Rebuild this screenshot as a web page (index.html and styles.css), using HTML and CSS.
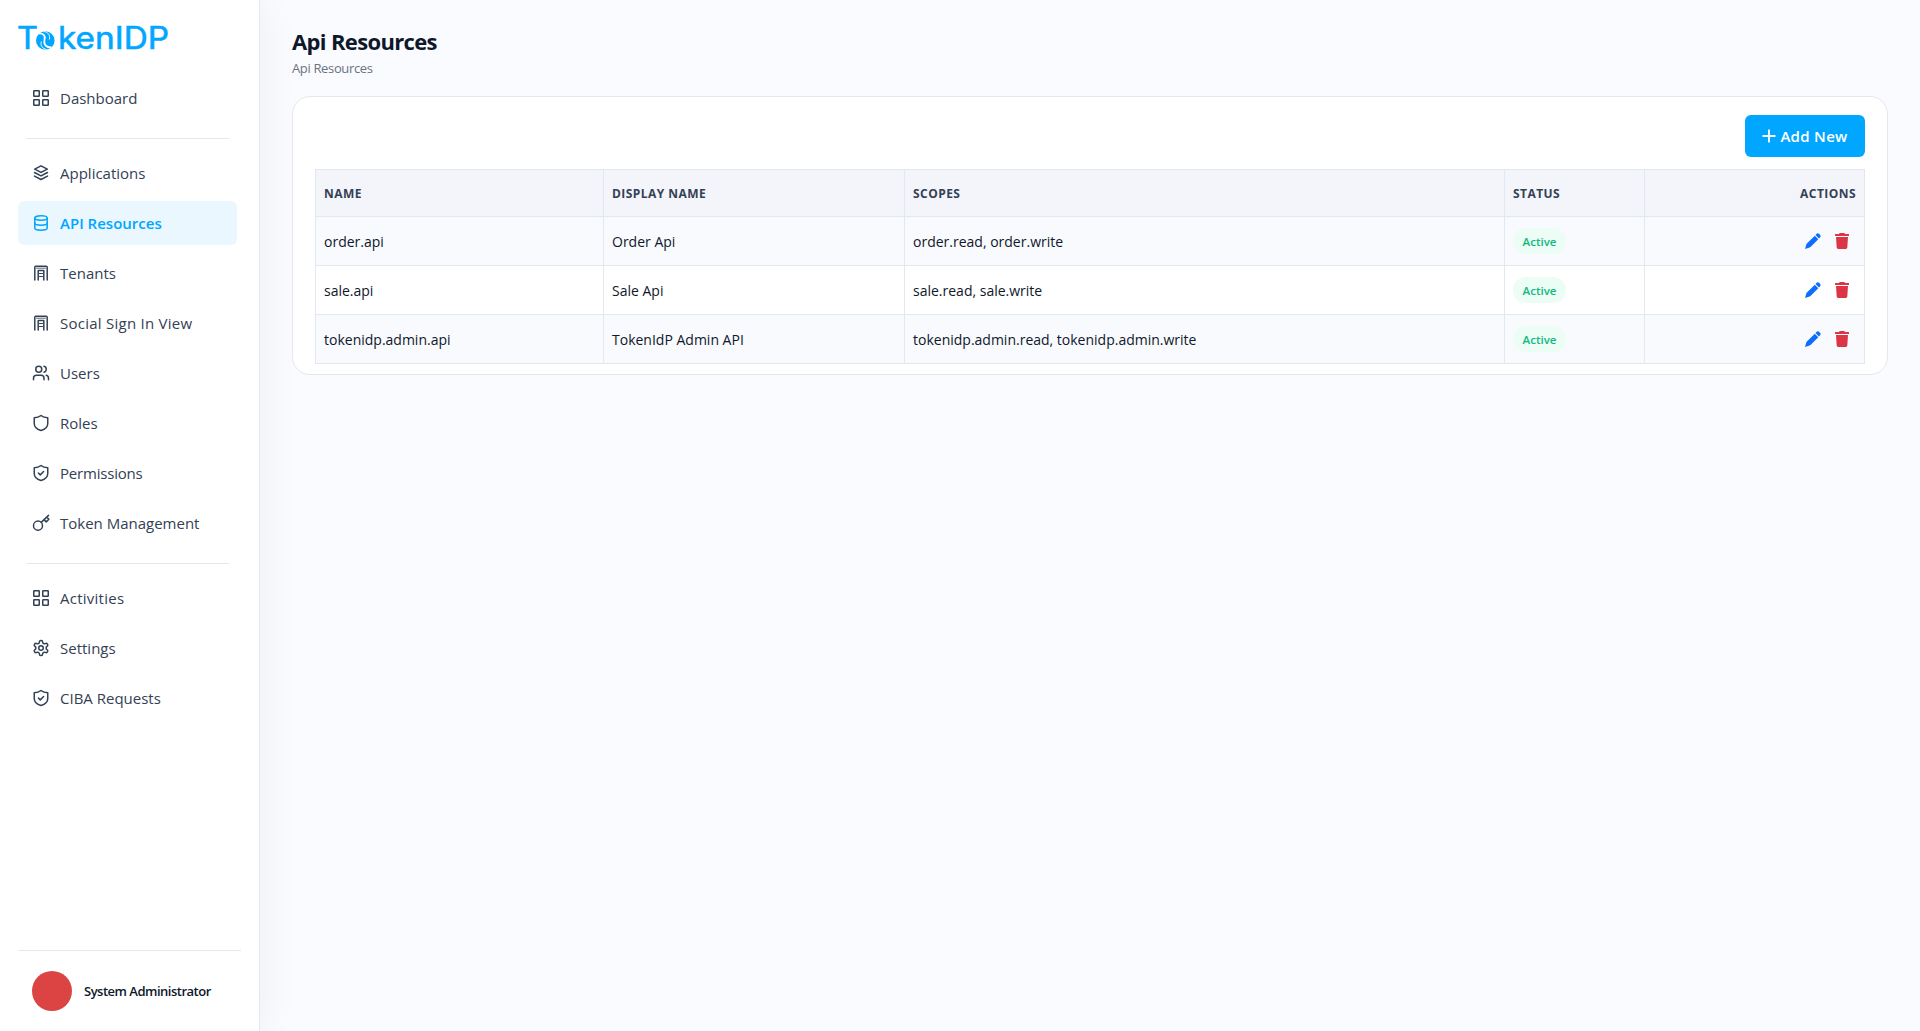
FILE: index.html
```
<!DOCTYPE html>
<html lang="en">
<head>
  <meta charset="UTF-8">
  <meta name="viewport" content="width=device-width, initial-scale=1.0">
  <title>Api Resources - TokenIDP</title>
  <link rel="stylesheet" href="styles.css">
</head>
<body>

  <!-- Shared icons -->
  <svg class="icon-defs" width="0" height="0">
    <symbol id="grid" viewBox="0 0 18 18">
      <rect x="1.75" y="1.75" width="5.5" height="5.5" rx="0.6"/>
      <rect x="10.75" y="1.75" width="5.5" height="5.5" rx="0.6"/>
      <rect x="1.75" y="10.75" width="5.5" height="5.5" rx="0.6"/>
      <rect x="10.75" y="10.75" width="5.5" height="5.5" rx="0.6"/>
    </symbol>
    <symbol id="layers" viewBox="0 0 18 18">
      <path d="M9 1.8 L15.3 5.1 L9 8.4 L2.7 5.1 Z"/>
      <path d="M2.5 8.5 L9 11.9 L15.5 8.5"/>
      <path d="M2.5 12.1 L9 15.500 L15.500 12.1"/>
    </symbol>
    <symbol id="database" viewBox="0 0 18 18">
      <ellipse cx="9" cy="4" rx="6.2" ry="2.2"/>
      <path d="M2.8 4v10c0 1.2 2.8 2.2 6.2 2.2s6.2-1 6.2-2.2V4"/>
      <path d="M2.8 9c0 1.2 2.8 2.2 6.2 2.2s6.2-1 6.2-2.2"/>
    </symbol>
    <symbol id="building" viewBox="0 0 18 18">
      <path d="M2.8 16V3.2q0-.9.9-.9h10.6q.9 0 .9.9V16"/>
      <path d="M4.500 4.200h9" stroke-width="0.8"/>
      <path d="M6.200 16V6.500h5.600V16"/>
      <path d="M7.500 9.500h3M7.500 12.500h3" stroke-width="1"/>
    </symbol>
    <symbol id="users" viewBox="0 0 24 24">
      <path d="M16 21v-2a4 4 0 0 0-4-4H6a4 4 0 0 0-4 4v2"/>
      <circle cx="9" cy="7" r="4"/>
      <path d="M22 21v-2a4 4 0 0 0-3-3.87M16 3.13a4 4 0 0 1 0 7.75"/>
    </symbol>
    <symbol id="shield" viewBox="0 0 24 24">
      <path d="M21 12.500c0 5-4 8-9 9.500-5-1.500-9-4.500-9-9.500V5q5.500-.3 9-3 3.500 2.700 9 3z"/>
    </symbol>
    <symbol id="shield-check" viewBox="0 0 24 24">
      <path d="M21 12.500c0 5-4 8-9 9.500-5-1.500-9-4.500-9-9.500V5q5.500-.3 9-3 3.500 2.700 9 3z"/>
      <path d="M8.500 12l2.500 2.500 4.500-4.500"/>
    </symbol>
    <symbol id="key" viewBox="0 0 24 24">
      <circle cx="8" cy="15.5" r="6"/>
      <path d="M12.3 11.2L22 1.8M16 7.5l3 3 3.5-3.5-3-3"/>
    </symbol>
    <symbol id="settings" viewBox="0 0 24 24">
      <path d="M12.22 2h-.44a2 2 0 0 0-2 2v.18a2 2 0 0 1-1 1.73l-.43.25a2 2 0 0 1-2 0l-.15-.08a2 2 0 0 0-2.73.73l-.22.38a2 2 0 0 0 .73 2.73l.15.1a2 2 0 0 1 1 1.72v.51a2 2 0 0 1-1 1.74l-.15.09a2 2 0 0 0-.73 2.73l.22.38a2 2 0 0 0 2.73.73l.15-.08a2 2 0 0 1 2 0l.43.25a2 2 0 0 1 1 1.73V20a2 2 0 0 0 2 2h.44a2 2 0 0 0 2-2v-.18a2 2 0 0 1 1-1.73l.43-.25a2 2 0 0 1 2 0l.15.08a2 2 0 0 0 2.73-.73l.22-.39a2 2 0 0 0-.73-2.73l-.15-.08a2 2 0 0 1-1-1.74v-.5a2 2 0 0 1 1-1.74l.15-.09a2 2 0 0 0 .73-2.73l-.22-.38a2 2 0 0 0-2.73-.73l-.15.08a2 2 0 0 1-2 0l-.43-.25a2 2 0 0 1-1-1.73V4a2 2 0 0 0-2-2z"/>
      <circle cx="12" cy="12" r="3"/>
    </symbol>
    <symbol id="pencil" viewBox="0 0 16 16">
      <path d="M11.4 1.100q1.300-1.500 2.900-.1l.7.700q1.300 1.400-.1 2.800l-.9.900-3.500-3.500zM9.800 2.700l3.500 3.500-7.800 7.800q-.4.400-.9.600L0 16l1.300-4.600q.2-.5.600-.9z"/>
    </symbol>
    <symbol id="trash" viewBox="0 0 16 16">
      <path d="M1.500 1H5q.2-1 1-1h4q.8 0 1 1h3.500q.5 0 .5.500V3H1V1.500q0-.5.500-.5zM2 4h12l-.7 10.600q-.1 1.400-1.500 1.400H4.200q-1.400 0-1.500-1.400z"/>
    </symbol>
  </svg>

  <div class="layout">
    <aside class="sidebar">
      <a class="logo" href="#">
        <svg width="160" height="40" viewBox="0 0 160 40">
          <text class="logo-text" x="-1" y="30.500" textLength="21" lengthAdjust="spacingAndGlyphs">T</text>
          <circle class="logo-disc" cx="27.3" cy="22.5" r="9.300"/>
          <path class="logo-swirl" d="M20.500 15.500c5-.500 7 2 6 6s.500 8 7 8"/>
          <path class="logo-swirl thin" d="M26 13.500c4 .8 6.500 3.500 5.300 8M28.600 31.500c-4-.8-6.500-3.500-5.300-8"/>
          <text class="logo-text" x="40" y="30.500" textLength="111" lengthAdjust="spacingAndGlyphs">kenIDP</text>
        </svg>
      </a>

      <nav class="nav">
        <a class="nav-item" href="#"><svg class="nav-icon"><use href="#grid"/></svg>Dashboard</a>
        <hr class="nav-divider">
        <a class="nav-item" href="#"><svg class="nav-icon"><use href="#layers"/></svg>Applications</a>
        <a class="nav-item active" href="#"><svg class="nav-icon"><use href="#database"/></svg>API Resources</a>
        <a class="nav-item" href="#"><svg class="nav-icon"><use href="#building"/></svg>Tenants</a>
        <a class="nav-item spaced" href="#"><svg class="nav-icon"><use href="#building"/></svg>Social Sign In View</a>
        <a class="nav-item" href="#"><svg class="nav-icon wide"><use href="#users"/></svg>Users</a>
        <a class="nav-item" href="#"><svg class="nav-icon wide"><use href="#shield"/></svg>Roles</a>
        <a class="nav-item tight" href="#"><svg class="nav-icon wide"><use href="#shield-check"/></svg>Permissions</a>
        <a class="nav-item" href="#"><svg class="nav-icon wide"><use href="#key"/></svg>Token Management</a>
        <hr class="nav-divider">
        <a class="nav-item spaced" href="#"><svg class="nav-icon"><use href="#grid"/></svg>Activities</a>
        <a class="nav-item" href="#"><svg class="nav-icon wide"><use href="#settings"/></svg>Settings</a>
        <a class="nav-item" href="#"><svg class="nav-icon wide"><use href="#shield-check"/></svg>CIBA Requests</a>
      </nav>

      <div class="user">
        <span class="avatar"></span>
        <span class="user-name">System Administrator</span>
      </div>
    </aside>

    <main class="main">
      <h1>Api Resources</h1>
      <p class="subtitle">Api Resources</p>

      <section class="card">
        <div class="toolbar">
          <button class="btn-add" type="button">
            <svg width="14" height="14" viewBox="0 0 14 14"><path d="M7 .5v13M.5 7h13"/></svg>
            <span>Add New</span>
          </button>
        </div>

        <table class="resources">
          <colgroup>
            <col class="col-name">
            <col class="col-display">
            <col class="col-scopes">
            <col class="col-status">
            <col class="col-actions">
          </colgroup>
          <thead>
            <tr>
              <th>Name</th>
              <th>Display Name</th>
              <th>Scopes</th>
              <th>Status</th>
              <th class="right">Actions</th>
            </tr>
          </thead>
          <tbody>
            <tr>
              <td>order.api</td>
              <td>Order Api</td>
              <td>order.read, order.write</td>
              <td><span class="badge">Active</span></td>
              <td><div class="actions"><svg class="edit"><use href="#pencil"/></svg><svg class="delete"><use href="#trash"/></svg></div></td>
            </tr>
            <tr>
              <td>sale.api</td>
              <td>Sale Api</td>
              <td>sale.read, sale.write</td>
              <td><span class="badge">Active</span></td>
              <td><div class="actions"><svg class="edit"><use href="#pencil"/></svg><svg class="delete"><use href="#trash"/></svg></div></td>
            </tr>
            <tr>
              <td>tokenidp.admin.api</td>
              <td>TokenIdP Admin API</td>
              <td>tokenidp.admin.read, tokenidp.admin.write</td>
              <td><span class="badge">Active</span></td>
              <td><div class="actions"><svg class="edit"><use href="#pencil"/></svg><svg class="delete"><use href="#trash"/></svg></div></td>
            </tr>
          </tbody>
        </table>
      </section>
    </main>
  </div>

</body>
</html>
```

FILE: styles.css
```
* {
  box-sizing: border-box;
}
body {
  margin: 0;
  font-family: "Segoe UI", "Open Sans", "Noto Sans", sans-serif;
  font-size: 14px;
  color: #0f172a;
  background-color: #fafbff;
}
.icon-defs {
  display: none;
}
.layout {
  display: flex;
  height: 100vh;
}

/* Sidebar */
.sidebar {
  display: flex;
  flex-direction: column;
  flex: none;
  width: 260px;
  padding: 18px 18px 18px;
  background-color: #fff;
  border-right: 1px solid #e2e8f0;
  box-shadow: 0 0 40px rgba(15, 23, 42, 0.06);
}
.logo {
  display: block;
  height: 40px;
}
.logo svg {
  display: block;
}
.logo-text {
  font-family: Inter, sans-serif;
  font-size: 31px;
  fill: #00a6ff;
  stroke: #00a6ff;
  stroke-width: 0.6;
}
.logo-disc {
  fill: #00a6ff;
}
.logo-swirl {
  fill: none;
  stroke: #fff;
  stroke-width: 1.8;
}
.logo-swirl.thin {
  stroke-width: 0.9;
}
.nav {
  display: flex;
  flex-direction: column;
  gap: 6px;
  margin-top: 18px;
  padding-right: 4px;
}
.nav-item {
  display: flex;
  align-items: center;
  gap: 10px;
  height: 44px;
  padding: 0 14px;
  border-radius: 6px;
  font-size: 15px;
  color: #334155;
  text-decoration: none;
  white-space: nowrap;
}
.nav-item.active {
  background-color: #eaf7ff;
  color: #00a6ff;
  font-weight: 600;
}
.nav-item.spaced {
  letter-spacing: 0.25px;
}
.nav-item.tight {
  letter-spacing: -0.2px;
}
.nav-icon {
  width: 18px;
  height: 18px;
  fill: none;
  stroke: currentColor;
  stroke-width: 1.5;
  stroke-linecap: round;
  stroke-linejoin: round;
}
.nav-icon.wide {
  stroke-width: 2;
}
.nav-divider {
  width: 203px;
  height: 1px;
  margin: 12px 8px 6px;
  border: 0;
  background-color: #e2e8f0;
}
.user {
  display: flex;
  align-items: center;
  gap: 12px;
  margin-top: auto;
  padding: 20px 14px 2px;
  border-top: 1px solid #e2e8f0;
}
.avatar {
  width: 40px;
  height: 40px;
  border-radius: 50%;
  background-color: #dc4444;
}
.user-name {
  font-size: 13px;
  font-weight: 600;
  letter-spacing: -0.5px;
  white-space: nowrap;
}

/* Content */
.main {
  flex: 1;
  padding: 25px 32px;
}
h1 {
  margin: 0;
  font-size: 22px;
  line-height: 32px;
  font-weight: 700;
  letter-spacing: -0.65px;
}
.subtitle {
  margin: 1px 0 0;
  font-size: 13px;
  line-height: 20px;
  letter-spacing: -0.35px;
  color: #6b7280;
}
.card {
  margin-top: 18px;
  padding: 18px 22px 10px;
  background-color: #fff;
  border: 1px solid #e5e7eb;
  border-radius: 18px;
}
.toolbar {
  display: flex;
  justify-content: flex-end;
  margin-bottom: 12px;
}
.btn-add {
  display: flex;
  align-items: center;
  justify-content: center;
  gap: 4px;
  width: 120px;
  height: 42px;
  padding: 0;
  border: 0;
  border-radius: 6px;
  background-color: #00a6ff;
  color: #fff;
  font-family: inherit;
  font-size: 15px;
  font-weight: 600;
  letter-spacing: 0.3px;
}
.btn-add svg {
  fill: none;
  stroke: #fff;
  stroke-width: 1.8;
}
.resources {
  width: 100%;
  table-layout: fixed;
  border-collapse: collapse;
}
.col-name { width: 288px; }
.col-display { width: 301px; }
.col-scopes { width: 600px; }
.col-status { width: 140px; }
.col-actions { width: 220px; }
th, td {
  border: 1px solid #e2e8f0;
  padding: 0 8px;
  text-align: left;
  white-space: nowrap;
}
th {
  height: 47px;
  background-color: #f3f5fb;
  color: #334155;
  font-size: 12px;
  font-weight: 700;
  letter-spacing: 0.45px;
  text-transform: uppercase;
}
th.right {
  text-align: right;
}
td {
  height: 49px;
}
tbody tr:nth-child(odd) {
  background-color: #f8fafe;
}
.badge {
  display: block;
  width: 53px;
  height: 26px;
  border-radius: 13px;
  background-color: #ecfdf5;
  color: #10b981;
  font-size: 11.5px;
  font-weight: 600;
  line-height: 27px;
  text-align: center;
}
.actions {
  display: flex;
  justify-content: flex-end;
  gap: 13px;
  padding-right: 6px;
}
.actions svg {
  width: 16px;
  height: 16px;
}
.edit {
  fill: #0d6efd;
}
.delete {
  fill: #dc3545;
}
```
